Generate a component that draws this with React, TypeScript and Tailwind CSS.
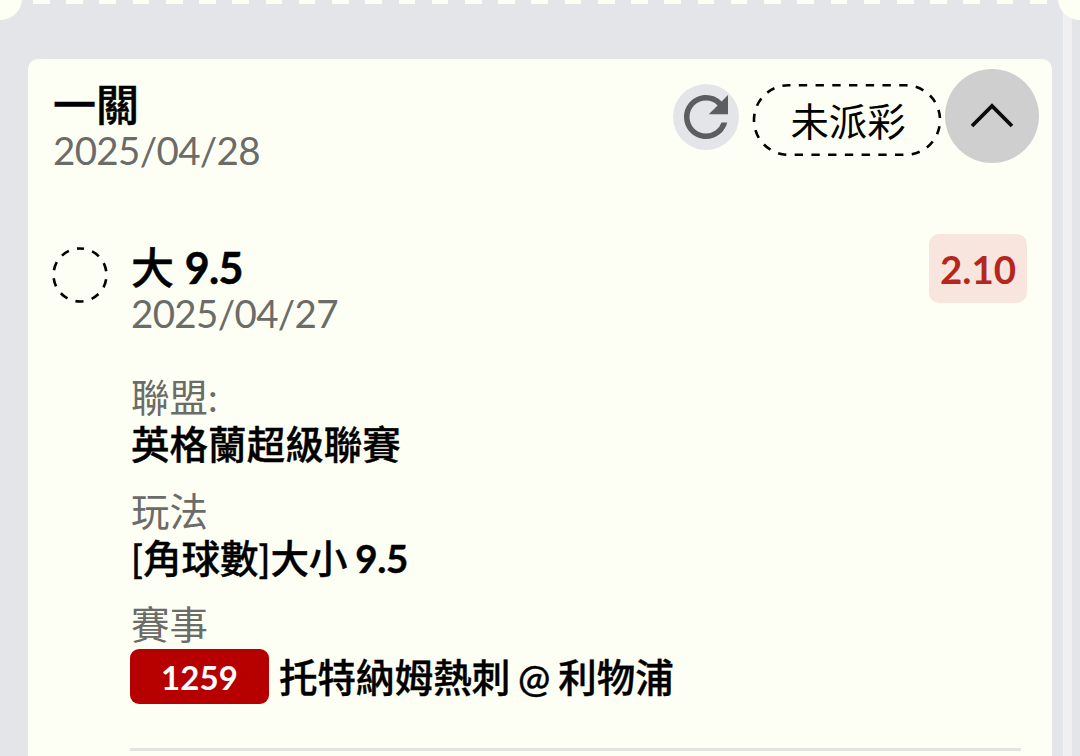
import { clsx } from 'clsx';
import type { ReactNode } from 'react';
import { MdRefresh } from 'react-icons/md';

const details: Array<{ label: string; value: ReactNode }> = [
  { label: '聯盟:', value: '英格蘭超級聯賽' },
  {
    label: '玩法',
    value: (
      <>
        [角球數]大小 <b className="tracking-[-0.4px]">9.5</b>
      </>
    ),
  },
];

const StatusPill = ({ children }: { children: ReactNode }) => (
  <div className="relative flex h-[73px] w-[190px] items-center justify-center text-[38.4px] leading-none text-black">
    <svg className="absolute inset-0" width="190" height="73" viewBox="0 0 190 73" fill="none">
      <rect
        x="2"
        y="2.3"
        width="186"
        height="69.5"
        rx="34.5"
        stroke="#000"
        strokeWidth="2.6"
        strokeDasharray="8.35 8.38"
        strokeDashoffset="6.4"
      />
    </svg>
    <span className="mt-[4px] ml-[2px]">{children}</span>
  </div>
);

const PendingMark = () => (
  <svg className="shrink-0" width="56" height="56" viewBox="0 0 56 56" fill="none">
    <circle
      cx="28"
      cy="28"
      r="26.5"
      stroke="#000"
      strokeWidth="2.6"
      strokeDasharray="8.3 8.35"
      strokeDashoffset="4.15"
      transform="rotate(-90 28 28)"
    />
  </svg>
);

const Heading = ({ title, date, className }: { title: ReactNode; date: string; className?: string }) => (
  <div className={clsx('leading-[46px]', className)}>
    <h2 className="text-[43px] font-medium text-black [-webkit-text-stroke:0.5px_black]">{title}</h2>
    <p className="-mt-px text-[38.5px] tracking-[-0.65px] text-[#6b6b68]">{date}</p>
  </div>
);

const App = () => {
  return (
    <main className="relative h-[756px] w-[1080px] overflow-hidden bg-[#e4e5e8] font-[Lato,'Noto_Sans_CJK_TC',sans-serif]">
      {/* Ticket tear line with the notches on both sides */}
      <div className="absolute top-0 left-[33px] h-1 w-[1015px] bg-[repeating-linear-gradient(90deg,#fefff4_0_16.6px,transparent_16.6px_33.23px)]" />
      <div className="absolute -top-[23px] -left-[21px] size-[43px] rounded-full bg-[#fefff4]" />
      <div className="absolute top-0 left-[1063px] h-full w-[9px] bg-[#f0f0f3]" />
      <div className="absolute -top-[23px] left-[1058px] size-[43px] rounded-full bg-[#fefff4]" />

      <section className="mt-[59px] ml-[27.5px] h-[710px] w-[1024.5px] rounded-[10px] bg-[#fefff4] pr-[13px] pl-[25.5px]">
        <header className="flex items-start justify-between pt-[10px]">
          <Heading title="一關" date="2025/04/28" className="pt-[13px]" />
          <div className="flex items-center">
            <button className="mt-[2px] flex size-[66px] items-center justify-center rounded-full bg-[#e4e5e8] text-[#5c5d60]">
              <MdRefresh size={66} />
            </button>
            <div className="mt-[7px] ml-[13px]">
              <StatusPill>未派彩</StatusPill>
            </div>
            <button className="ml-[3px] flex size-[94px] items-center justify-center rounded-full bg-[#cfcfcf]">
              <svg width="46" height="28" viewBox="0 0 46 28" fill="none" stroke="#0c0c0c" strokeWidth="3.8">
                <path d="M3 24 23 4 43 24" />
              </svg>
            </button>
          </div>
        </header>

        <div className="mt-[61px] flex items-start">
          <div className="mt-[13px] -ml-px">
            <PendingMark />
          </div>
          <div className="ml-[22px] w-[891px]">
            <div className="flex items-start justify-between">
              <Heading
                title={
                  <>
                    大 <b className="tracking-[-0.8px]">9.5</b>
                  </>
                }
                date="2025/04/27"
                className="pt-[11px] pl-px"
              />
              <span className="mr-[-6px] flex h-[69px] w-[98px] items-center justify-center rounded-[10px] bg-[#f8e6de] pt-[2px] text-[38.5px] font-bold text-[#b5261e]">
                2.10
              </span>
            </div>

            <dl className="mt-[38px] text-[38.5px] leading-[47px] tracking-[0.05px] [word-spacing:-2px]">
              {details.map((item) => (
                <div key={item.label} className="mb-[19.5px] pl-px">
                  <dt className="text-[#6b6b68]">{item.label}</dt>
                  <dd className="font-medium text-black [-webkit-text-stroke:0.4px_black]">{item.value}</dd>
                </div>
              ))}
              <div>
                <dt className="pl-px text-[#6b6b68]">賽事</dt>
                <dd className="mt-px flex items-center font-medium text-black">
                  <span className="mr-[10px] flex h-[55px] w-[139px] items-center justify-center rounded-[9px] bg-[#b60000] pt-[2px] text-[33px] font-bold text-white">
                    1259
                  </span>
                  <span className="pt-px [-webkit-text-stroke:0.4px_black]">托特納姆熱刺 @ 利物浦</span>
                </dd>
              </div>
            </dl>

            <hr className="mt-[44px] border-0 border-t-[3px] border-[#e3e4de]" />
          </div>
        </div>
      </section>
    </main>
  );
};

export default App;
